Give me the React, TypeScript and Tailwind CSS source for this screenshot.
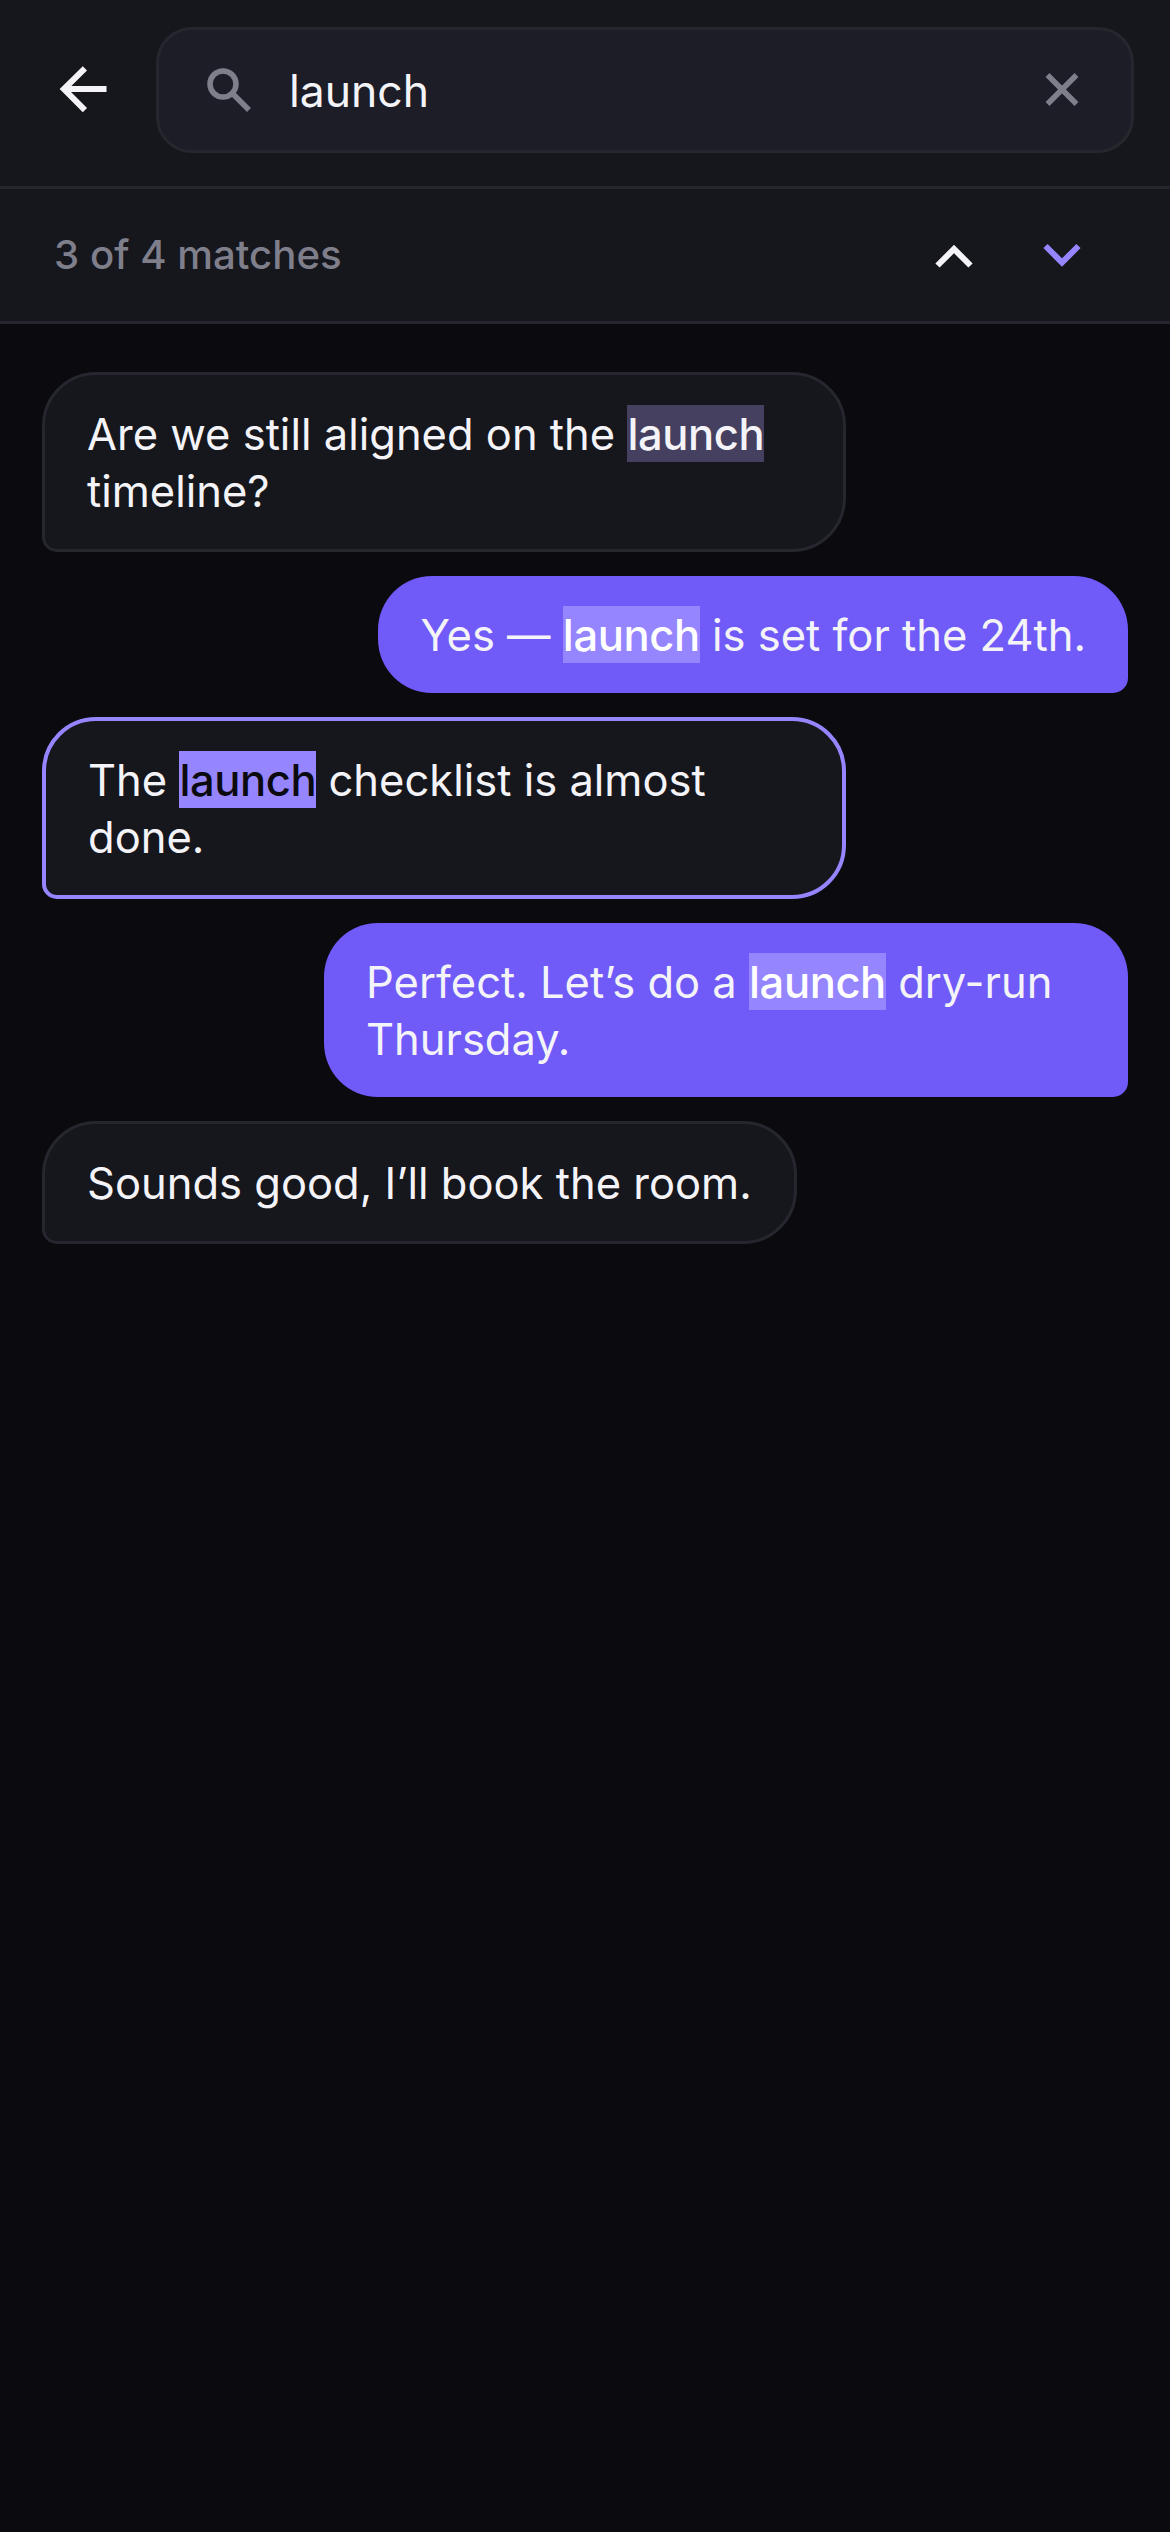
import React from 'react';

const Hit: React.FC<{ className: string; children: React.ReactNode }> = ({ className, children }) => (
  <mark className={`-mt-px inline-block pt-[2px] font-medium leading-[55px] tracking-[-0.4px] ${className}`}>{children}</mark>
);

const Received: React.FC<{ active?: boolean; children: React.ReactNode }> = ({ active, children }) => (
  <div
    className={`max-w-[804px] self-start rounded-[54px] rounded-bl-[15px] bg-[#16161d] px-[42px] pb-[29px] pt-[31px] ${
      active ? 'border-[4.5px] border-[#9585ff]' : 'border-[3px] border-[#26262e]'
    }`}
  >
    {children}
  </div>
);

const Sent: React.FC<{ children: React.ReactNode }> = ({ children }) => (
  <div className="max-w-[804px] self-end rounded-[54px] rounded-br-[15px] bg-[#705af8] px-[42px] pb-[29px] pt-[31px]">
    {children}
  </div>
);

export default function App() {
  return (
    <div className="flex min-h-screen flex-col bg-[#0a0a0f] font-['Inter',sans-serif] text-[#f4f4f8]">
      <header className="flex h-[189px] items-start gap-[24px] border-b-[3px] border-[#26262e] bg-[#16161d] px-[36px] pt-[27px]">
        <button className="flex h-[126px] w-[96px] items-center justify-center text-[#f4f4f8]">
          <svg width="72" height="72" viewBox="0 0 24 24" fill="none" stroke="currentColor" strokeWidth="2">
            <path d="M19.5 11.7H5.5" />
            <path d="M12.3 4.8 5.3 11.7l7 7" />
          </svg>
        </button>
        <div className="flex h-[126px] flex-1 items-center gap-[34px] rounded-[36px] border-[3px] border-[#26262e] bg-[#1c1d27] px-[42px]">
          <svg width="54" height="54" viewBox="0 0 54 54" fill="none" stroke="#7f7f8c" strokeWidth="5.5">
            <circle cx="22" cy="21" r="13" />
            <path d="M31.5 30.5 48 47" />
          </svg>
          <span className="flex-1 pt-[2px] text-[44.5px] leading-[56px]">launch</span>
          <svg width="54" height="54" viewBox="0 0 54 54" fill="none" stroke="#7f7f8c" strokeWidth="5.5">
            <path d="M12.5 12 41.5 41M41.5 12 12.5 41" />
          </svg>
        </div>
      </header>

      <div className="flex h-[135px] items-center justify-between border-b-[3px] border-[#26262e] bg-[#16161d] pl-[54px] pr-[72px]">
        <span className="text-[40.2px] font-medium text-[#7f7f8c]">3 of 4 matches</span>
        <div className="flex items-center gap-[36px]">
          <svg width="72" height="72" viewBox="0 0 24 24" fill="none" stroke="#f4f4f8" strokeWidth="2">
            <path d="M6.5 15.5 12 10l5.5 5.5" />
          </svg>
          <svg width="72" height="72" viewBox="0 0 24 24" fill="none" stroke="#9585ff" strokeWidth="2">
            <path d="M6.5 9 12 14.5 17.5 9" />
          </svg>
        </div>
      </div>

      <div className="flex flex-col gap-[24px] px-[42px] pt-[48px] text-[43.5px] leading-[57px]">
        <Received>
          Are we still aligned on the <Hit className="bg-[#45405f] text-[#f4f4f8]">launch</Hit> timeline?
        </Received>
        <Sent>
          Yes — <Hit className="bg-[#9585ff] text-white">launch</Hit> is set for the 24th.
        </Sent>
        <Received active>
          The <Hit className="bg-[#9585ff] text-[#0a0a0f]">launch</Hit> checklist is almost done.
        </Received>
        <Sent>
          Perfect. Let’s do a <Hit className="bg-[#9585ff] text-white">launch</Hit> dry-run Thursday.
        </Sent>
        <Received>Sounds good, I’ll book the room.</Received>
      </div>
    </div>
  );
}
